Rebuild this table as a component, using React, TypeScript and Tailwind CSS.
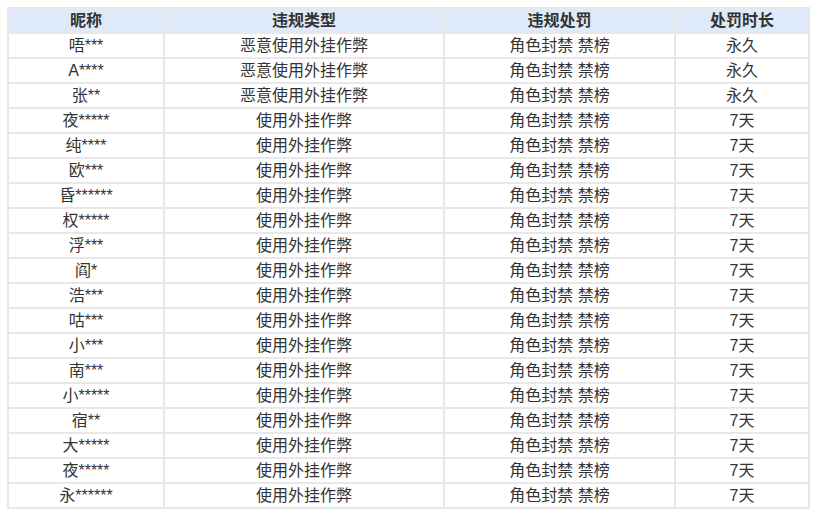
import React from 'react';

type Row = {
  name: string;
  type: string;
  punish: string;
  duration: string;
};

const rows: Row[] = [
  { name: '唔***', type: '恶意使用外挂作弊', punish: '角色封禁 禁榜', duration: '永久' },
  { name: 'A****', type: '恶意使用外挂作弊', punish: '角色封禁 禁榜', duration: '永久' },
  { name: '张**', type: '恶意使用外挂作弊', punish: '角色封禁 禁榜', duration: '永久' },
  { name: '夜*****', type: '使用外挂作弊', punish: '角色封禁 禁榜', duration: '7天' },
  { name: '纯****', type: '使用外挂作弊', punish: '角色封禁 禁榜', duration: '7天' },
  { name: '欧***', type: '使用外挂作弊', punish: '角色封禁 禁榜', duration: '7天' },
  { name: '昏******', type: '使用外挂作弊', punish: '角色封禁 禁榜', duration: '7天' },
  { name: '权*****', type: '使用外挂作弊', punish: '角色封禁 禁榜', duration: '7天' },
  { name: '浮***', type: '使用外挂作弊', punish: '角色封禁 禁榜', duration: '7天' },
  { name: '阎*', type: '使用外挂作弊', punish: '角色封禁 禁榜', duration: '7天' },
  { name: '浩***', type: '使用外挂作弊', punish: '角色封禁 禁榜', duration: '7天' },
  { name: '咕***', type: '使用外挂作弊', punish: '角色封禁 禁榜', duration: '7天' },
  { name: '小***', type: '使用外挂作弊', punish: '角色封禁 禁榜', duration: '7天' },
  { name: '南***', type: '使用外挂作弊', punish: '角色封禁 禁榜', duration: '7天' },
  { name: '小*****', type: '使用外挂作弊', punish: '角色封禁 禁榜', duration: '7天' },
  { name: '宿**', type: '使用外挂作弊', punish: '角色封禁 禁榜', duration: '7天' },
  { name: '大*****', type: '使用外挂作弊', punish: '角色封禁 禁榜', duration: '7天' },
  { name: '夜*****', type: '使用外挂作弊', punish: '角色封禁 禁榜', duration: '7天' },
  { name: '永******', type: '使用外挂作弊', punish: '角色封禁 禁榜', duration: '7天' }
];

const headers = ['昵称', '违规类型', '违规处罚', '处罚时长'];

export default function App() {
  return (
    <div className="w-[816px] h-[515px] bg-white pt-[7px] pl-[7px] font-['Liberation_Sans','Noto_Sans_CJK_SC',sans-serif] text-[#333]">
      <table className="w-[801px] table-fixed border-collapse text-[16px]">
        <colgroup>
          <col className="w-[156px]" />
          <col className="w-[280px]" />
          <col className="w-[231px]" />
          <col className="w-[134px]" />
        </colgroup>
        <thead>
          <tr className="h-[25px] bg-[#deeaf9]">
            {headers.map((h) => (
              <th key={h} className="border-2 border-[#e8e8e8] p-0 text-center font-bold leading-none">
                {h}
              </th>
            ))}
          </tr>
        </thead>
        <tbody>
          {rows.map((r, i) => (
            <tr key={i} className="h-[25px]">
              <td className="border-2 border-[#e8e8e8] p-0 text-center leading-none">{r.name}</td>
              <td className="border-2 border-[#e8e8e8] p-0 text-center leading-none">{r.type}</td>
              <td className="border-2 border-[#e8e8e8] p-0 text-center leading-none">{r.punish}</td>
              <td className="border-2 border-[#e8e8e8] p-0 text-center leading-none">{r.duration}</td>
            </tr>
          ))}
        </tbody>
      </table>
    </div>
  );
}
